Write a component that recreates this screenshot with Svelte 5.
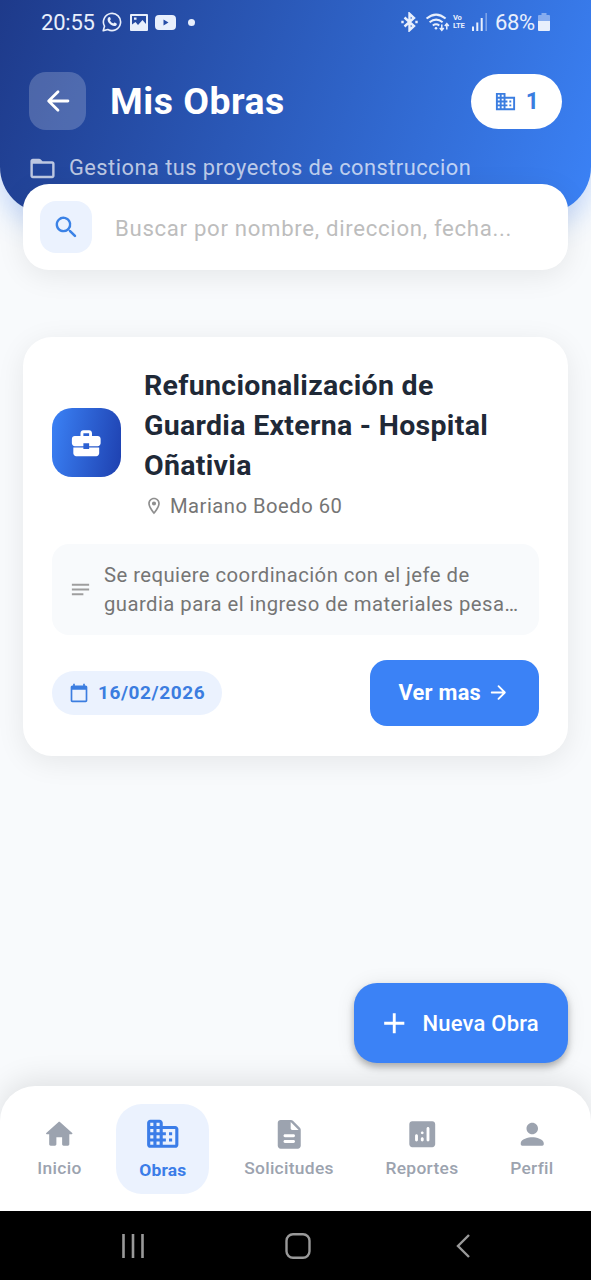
<script>
	let query = $state('');
	let active = $state('Obras');

	const obras = [
		{
			title: 'Refuncionalización de Guardia Externa - Hospital Oñativia',
			address: 'Mariano Boedo 60',
			notes: 'Se requiere coordinación con el jefe de\nguardia para el ingreso de materiales pesa…',
			date: '16/02/2026'
		}
	];

	const windows =
		'M6 19H4v-2h2v2zm0-4H4v-2h2v2zm0-4H4V9h2v2zm0-4H4V5h2v2zm4 12H8v-2h2v2zm0-4H8v-2h2v2zm0-4H8V9h2v2zm0-4H8V5h2v2zm10 12h-8v-2h2v-2h-2v-2h2v-2h-2V9h8v10zm-2-8h-2v2h2v-2zm0 4h-2v2h2v-2z';

	const icons = {
		back: 'M19 11H7.83l4.88-4.88c.39-.39.39-1.03 0-1.42a1 1 0 0 0-1.41 0l-6.59 6.59a1 1 0 0 0 0 1.41l6.59 6.59a1 1 0 0 0 1.41-1.41L7.83 13H19c.55 0 1-.45 1-1s-.45-1-1-1z',
		forward:
			'M5 13h11.17l-4.88 4.88c-.39.39-.39 1.03 0 1.42a1 1 0 0 0 1.41 0l6.59-6.59a1 1 0 0 0 0-1.41l-6.58-6.6a1 1 0 0 0-1.41 1.41L16.17 11H5c-.55 0-1 .45-1 1s.45 1 1 1z',
		building: 'M12 7V3H2v18h20V7H12z' + windows,
		buildingRound:
			'M12 7V5c0-1.1-.9-2-2-2H4c-1.1 0-2 .9-2 2v14c0 1.1.9 2 2 2h16c1.1 0 2-.9 2-2V9c0-1.1-.9-2-2-2h-8z' +
			windows,
		folder:
			'M20 6h-8l-1.41-1.41C10.21 4.21 9.7 4 9.17 4H4c-1.1 0-2 .9-2 2v12c0 1.1.9 2 2 2h16c1.1 0 2-.9 2-2V8c0-1.1-.9-2-2-2zm0 12H4V8h16v10z',
		search:
			'M15.5 14h-.79l-.28-.27a6.5 6.5 0 0 0 1.48-5.34c-.47-2.78-2.79-5-5.59-5.34a6.505 6.505 0 0 0-7.27 7.27c.34 2.8 2.56 5.12 5.34 5.59a6.5 6.5 0 0 0 5.34-1.48l.27.28v.79l4.25 4.25c.41.41 1.08.41 1.49 0 .41-.41.41-1.08 0-1.49L15.5 14zm-6 0C7.01 14 5 11.99 5 9.5S7.01 5 9.5 5 14 7.01 14 9.5 11.99 14 9.5 14z',
		briefcase:
			'M10 16v-1H3.01L3 19c0 1.11.89 2 2 2h14c1.11 0 2-.89 2-2v-4h-7v1h-4zm10-9h-4.01V5c0-1.1-.9-2-2-2h-4c-1.1 0-2 .9-2 2v2H4c-1.1 0-2 .9-2 2v3c0 1.11.89 2 2 2h6v-2h4v2h6c1.1 0 2-.9 2-2V9c0-1.1-.9-2-2-2zm-6 0h-4V5h4v2z',
		pin: 'M12 2C8.13 2 5 5.13 5 9c0 5.25 7 13 7 13s7-7.75 7-13c0-3.87-3.13-7-7-7zM7 9c0-2.76 2.24-5 5-5s5 2.24 5 5c0 2.88-2.88 7.19-5 9.88C9.92 16.21 7 11.85 7 9zm5-2.5a2.5 2.5 0 1 0 0 5 2.5 2.5 0 1 0 0-5z',
		notes: 'M3 6h18v2H3zM3 11h18v2H3zM3 16h12v2H3z',
		calendar:
			'M20 3h-1V1h-2v2H7V1H5v2H4c-1.1 0-2 .9-2 2v16c0 1.1.9 2 2 2h16c1.1 0 2-.9 2-2V5c0-1.1-.9-2-2-2zm0 18H4V8h16v13z',
		plus: 'M19 13h-6v6h-2v-6H5v-2h6V5h2v6h6v2z',
		home: 'M10 19v-5h4v5c0 .55.45 1 1 1h3c.55 0 1-.45 1-1v-7h1.7c.46 0 .68-.57.33-.87L12.67 3.6c-.38-.34-.96-.34-1.34 0l-8.36 7.53c-.34.3-.13.87.33.87H5v7c0 .55.45 1 1 1h3c.55 0 1-.45 1-1z',
		document:
			'M14.59 2.59c-.38-.38-.89-.59-1.42-.59H6c-1.1 0-2 .9-2 2v16c0 1.1.89 2 1.99 2H18c1.1 0 2-.9 2-2V8.83c0-.53-.21-1.04-.59-1.41l-4.82-4.83zM15 18H9c-.55 0-1-.45-1-1s.45-1 1-1h6c.55 0 1 .45 1 1s-.45 1-1 1zm0-4H9c-.55 0-1-.45-1-1s.45-1 1-1h6c.55 0 1 .45 1 1s-.45 1-1 1zm-2-6V3.5L18.5 9H14c-.55 0-1-.45-1-1z',
		chart:
			'M19 3H5c-1.1 0-2 .9-2 2v14c0 1.1.9 2 2 2h14c1.1 0 2-.9 2-2V5c0-1.1-.9-2-2-2zM8 17c-.55 0-1-.45-1-1v-3c0-.55.45-1 1-1s1 .45 1 1v3c0 .55-.45 1-1 1zm4 0c-.55 0-1-.45-1-1v-1c0-.55.45-1 1-1s1 .45 1 1v1c0 .55-.45 1-1 1zm0-5c-.55 0-1-.45-1-1s.45-1 1-1 1 .45 1 1-.45 1-1 1zm4 5c-.55 0-1-.45-1-1V8c0-.55.45-1 1-1s1 .45 1 1v8c0 .55-.45 1-1 1z',
		person:
			'M12 12c2.21 0 4-1.79 4-4s-1.79-4-4-4-4 1.79-4 4 1.79 4 4 4zm0 2c-2.67 0-8 1.34-8 4v1c0 .55.45 1 1 1h14c.55 0 1-.45 1-1v-1c0-2.66-5.33-4-8-4z'
	};

	const tabs = [
		{ label: 'Inicio', icon: 'home' },
		{ label: 'Obras', icon: 'buildingRound' },
		{ label: 'Solicitudes', icon: 'document' },
		{ label: 'Reportes', icon: 'chart' },
		{ label: 'Perfil', icon: 'person' }
	];
</script>

{#snippet icon(name, size)}
	<svg class="icon" width={size} height={size} viewBox="0 0 24 24" fill="currentColor" fill-rule="evenodd">
		<path d={icons[name]} />
	</svg>
{/snippet}

<div class="screen">
	<header>
		<div class="status">
			<span class="time">20:55</span>
			<svg class="whatsapp" width="20" height="20" viewBox="0 0 20 20">
				<path d="M1.2 18.8l1.3-4.6A8.6 8.6 0 1 1 5.8 17.5z" fill="none" stroke="currentColor" stroke-width="1.6" stroke-linejoin="round" />
				<path d="M6.7 5.3c.6-.5 1.2-.4 1.5.2l.6 1.5c.1.5-.5 1-.8 1.4.8 1.5 1.9 2.5 3.5 3.2.4-.4.8-1.1 1.3-1l1.7.9c.7.4.2 1.5-.3 2-1.2 1-3 .7-5-.5C7 11.6 5.7 9.6 5.6 7.8c0-1 .4-2 1.1-2.5z" fill="currentColor" />
			</svg>
			<svg class="gallery" width="18" height="17" viewBox="0 0 18 17" fill="currentColor" fill-rule="evenodd">
				<path d="M1 0h16q1 0 1 1v15q0 1-1 1H1q-1 0-1-1V1q0-1 1-1zM2 2v8.500l3.500-2.500 2.500 3 4.500-5L16 10V2zM4 3.500h2.500v2.300H4z" />
			</svg>
			<svg class="video" width="21" height="15" viewBox="0 0 21 15" fill="currentColor" fill-rule="evenodd">
				<path d="M4 0h13q4 0 4 4v7q0 4-4 4H4q-4 0-4-4V4q0-4 4-4zM8.5 4.5v6l5-3z" />
			</svg>
			<i class="dot"></i>

			<div class="signals">
				<svg width="17" height="20" viewBox="0 0 17 20" fill="none" stroke="currentColor" stroke-width="2.4">
					<path d="M3.5 5.5l9.500 8.500-4.500 4.200V1.800L13 6l-9.500 8.500" />
					<path d="M.3 10h2.400M14.300 10h2.400" />
				</svg>
				<svg class="wifi" width="24" height="19" viewBox="0 0 24 19" fill="none" stroke="currentColor" stroke-width="2">
					<path d="M.6 5.6q9.500-8 19 0M3.600 9.200q6.500-5.200 13 0M6.800 12.500q3.300-2.500 6.500 0" />
					<circle cx="10" cy="15.3" r="1.3" fill="currentColor" stroke="none" />
					<path d="M15.800 11.500v5.500M13.800 15l2 2.300 2-2.300M20.800 16.500v-5.500M18.800 13l2-2.300 2 2.300" stroke-width="1.5" />
				</svg>
				<span class="volte"><b>Vo</b><b>LTE</b></span>
				<svg class="bars" width="16" height="18" viewBox="0 0 16 18" fill="currentColor">
					<path d="M0 13.500h2V18H0zM4.300 9.500h2V18h-2zM8.700 5h2v13h-2z" />
					<path d="M13.400 0h1.600v18h-1.600z" opacity=".4" />
				</svg>
				<span class="percent">68%</span>
				<svg class="battery" width="12" height="18" viewBox="0 0 12 18" fill="currentColor">
					<path d="M3.500 0h5v2H11q1 0 1 1v5H0V3q0-1 1-1h2.500z" opacity=".45" />
					<path d="M0 8h12v9q0 1-1 1H1q-1 0-1-1z" />
				</svg>
			</div>
		</div>

		<div class="heading">
			<button class="back" aria-label="Volver">{@render icon('back', 34)}</button>
			<h1>Mis Obras</h1>
			<div class="count">
				{@render icon('building', 23)}
				<span>{obras.length}</span>
			</div>
		</div>

		<div class="subtitle">
			{@render icon('folder', 29)}
			<span>Gestiona tus proyectos de construccion</span>
		</div>
	</header>

	<main>
		<label class="search">
			<span class="search-icon">{@render icon('search', 29)}</span>
			<input bind:value={query} placeholder="Buscar por nombre, direccion, fecha..." />
		</label>

		{#each obras as obra}
			<article>
				<div class="top">
					<div class="badge">{@render icon('briefcase', 34.5)}</div>
					<div class="info">
						<h2>{obra.title}</h2>
						<p class="address">{@render icon('pin', 20)}<span>{obra.address}</span></p>
					</div>
				</div>
				<div class="notes">
					{@render icon('notes', 23)}
					<p>{obra.notes}</p>
				</div>
				<div class="bottom">
					<span class="date">{@render icon('calendar', 20)}<span>{obra.date}</span></span>
					<button class="more"><span>Ver mas</span>{@render icon('forward', 23)}</button>
				</div>
			</article>
		{/each}

		<button class="fab">{@render icon('plus', 34.5)}<span>Nueva Obra</span></button>
	</main>

	<nav>
		{#each tabs as tab}
			<button class="tab" class:active={tab.label === active} onclick={() => (active = tab.label)}>
				{@render icon(tab.icon, tab.label === active ? 37.5 : 34.5)}
				<span>{tab.label}</span>
			</button>
		{/each}
	</nav>

	<footer>
		<svg width="24" height="24" viewBox="0 0 24 24" stroke="currentColor" stroke-width="2.6">
			<path d="M2.500 0v24M12 0v24M21.500 0v24" />
		</svg>
		<svg width="26" height="26" viewBox="0 0 26 26" fill="none" stroke="currentColor" stroke-width="2.4">
			<rect x="1.5" y="1.2" width="23" height="23.6" rx="6.5" />
		</svg>
		<svg width="14" height="24" viewBox="0 0 14 24" fill="none" stroke="currentColor" stroke-width="2.4">
			<path d="M13 1L2 12l11 11" />
		</svg>
	</footer>
</div>

<style>
	:global(body) {
		margin: 0;
	}

	.screen {
		height: 1280px;
		display: flex;
		flex-direction: column;
		overflow: hidden;
		background: #f8fafc;
		font-family: Roboto, sans-serif;
	}

	.screen * {
		box-sizing: border-box;
	}

	h1,
	h2,
	p {
		margin: 0;
	}

	button {
		border: 0;
		padding: 0;
		font: inherit;
		display: flex;
		align-items: center;
		white-space: nowrap;
	}

	svg {
		display: block;
		flex: none;
	}

	header {
		height: 213px;
		flex: none;
		color: #fff;
		background: linear-gradient(109.8deg, #1e3a8a, #3b82f6);
		border-radius: 0 0 46px 46px;
		box-shadow: 0 11px 29px rgb(59 130 246 / 0.3);
	}

	.status {
		height: 44px;
		padding: 0 41px;
		display: flex;
		align-items: center;
		font-size: 22px;
		color: #e8effc;
	}

	.time {
		width: 55px;
		letter-spacing: -0.2px;
	}

	.whatsapp {
		margin-left: 6px;
	}

	.gallery {
		margin-left: 8px;
	}

	.video {
		margin-left: 7px;
	}

	.dot {
		width: 7px;
		height: 7px;
		margin-left: 12px;
		border-radius: 50%;
		background: currentColor;
	}

	.signals {
		margin-left: auto;
		display: flex;
		align-items: center;
	}

	.wifi {
		margin-left: 8px;
	}

	.volte {
		margin-left: 3px;
		width: 14px;
		display: grid;
		font-size: 7.6px;
		line-height: 8px;
		letter-spacing: -0.2px;
	}

	.bars {
		margin-left: 5px;
	}

	.percent {
		margin-left: 7px;
		width: 40px;
		letter-spacing: -0.4px;
	}

	.battery {
		margin-left: 3px;
	}

	.heading {
		height: 58px;
		margin: 28px 0 23px;
		padding: 0 29px;
		display: flex;
		align-items: center;
	}

	.back {
		width: 57px;
		height: 58px;
		justify-content: center;
		border-radius: 17px;
		color: #fff;
		background: rgb(255 255 255 / 0.2);
	}

	h1 {
		margin-left: 24px;
		font-size: 37.4px;
		font-weight: 700;
		letter-spacing: 0.5px;
	}

	.count {
		height: 55px;
		margin-left: auto;
		padding: 0 23px;
		display: flex;
		align-items: center;
		gap: 9px;
		border-radius: 28px;
		background: #fff;
		color: #3b7de0;
		font-size: 23px;
		font-weight: 700;
	}

	.subtitle {
		padding-left: 28px;
		display: flex;
		align-items: center;
		gap: 12px;
		font-size: 21.8px;
		line-height: 30px;
		letter-spacing: 0.48px;
		color: rgb(255 255 255 / 0.7);
	}

	main {
		position: relative;
		flex: 1;
		padding: 0 23px;
	}

	.search {
		height: 86px;
		margin-top: -29px;
		padding: 0 17px;
		display: flex;
		align-items: center;
		gap: 23px;
		border-radius: 26px;
		background: #fff;
		box-shadow: 0 6px 29px rgb(0 0 0 / 0.08);
	}

	.search-icon {
		width: 52px;
		height: 52px;
		display: grid;
		place-content: center;
		border-radius: 16px;
		background: #ebf2fe;
		color: #3b82e6;
	}

	input {
		flex: 1;
		min-width: 0;
		border: 0;
		padding: 2px 0 0;
		outline: 0;
		font: 22.2px Roboto, sans-serif;
		letter-spacing: 0.68px;
		background: none;
	}

	input::placeholder {
		color: #bdbdbd;
	}

	article {
		height: 419px;
		margin-top: 67px;
		padding: 29px;
		border-radius: 29px;
		background: #fff;
		box-shadow: 0 6px 29px rgb(0 0 0 / 0.08);
	}

	.top {
		display: flex;
		align-items: center;
		gap: 23px;
	}

	.badge {
		width: 69px;
		height: 69px;
		flex: none;
		display: grid;
		place-content: center;
		border-radius: 20px;
		color: #fff;
		background: linear-gradient(100deg, #3b82f6, #1e40af);
	}

	h2 {
		font-size: 28.5px;
		line-height: 40.2px;
		font-weight: 700;
		letter-spacing: 0.3px;
		color: #1f2937;
	}

	.address {
		height: 28px;
		margin-top: 5px;
		display: flex;
		align-items: center;
		gap: 6px;
		font-size: 20.2px;
		letter-spacing: 0.5px;
		color: #757575;
	}

	.address .icon {
		color: #8f8f8f;
	}

	.notes {
		height: 91px;
		margin-top: 24px;
		padding: 0 17px;
		display: flex;
		align-items: center;
		gap: 12px;
		border-radius: 17px;
		background: #f8fafc;
		color: #9e9e9e;
	}

	.notes p {
		padding-top: 2px;
		font-size: 20.3px;
		line-height: 28.75px;
		letter-spacing: 0.45px;
		white-space: pre;
		color: #757575;
	}

	.bottom {
		margin-top: 25px;
		display: flex;
		align-items: center;
		justify-content: space-between;
	}

	.date {
		height: 44px;
		padding: 0 17px;
		display: flex;
		align-items: center;
		gap: 9px;
		border-radius: 22px;
		background: #ebf2fe;
		color: #3b7de0;
		font-size: 19px;
		font-weight: 700;
		letter-spacing: 0.58px;
	}

	.more {
		height: 66px;
		padding: 0 29px;
		gap: 6px;
		border-radius: 17px;
		background: #3b82f6;
		color: #fff;
		font-size: 21.8px;
		font-weight: 700;
		letter-spacing: 0.25px;
	}

	.fab {
		position: absolute;
		right: 23px;
		bottom: 23px;
		width: 214px;
		height: 80px;
		padding-left: 23px;
		gap: 11px;
		border-radius: 23px;
		background: #3b82f6;
		color: #fff;
		font-size: 22px;
		font-weight: 500;
		letter-spacing: 0.2px;
		box-shadow: 0 4px 7px rgb(0 0 0 / 0.28), 0 1px 20px rgb(0 0 0 / 0.08);
	}

	nav {
		height: 125px;
		flex: none;
		padding: 0 11.5px;
		display: flex;
		align-items: center;
		justify-content: space-around;
		border-radius: 35px 35px 0 0;
		background: #fff;
		box-shadow: 0 -6px 29px rgb(0 0 0 / 0.1);
	}

	.tab {
		height: 90px;
		padding: 0 17px 2px;
		flex-direction: column;
		justify-content: center;
		gap: 7px;
		border-radius: 26px;
		background: none;
		color: #9ca3af;
		font-size: 17.4px;
		line-height: 20px;
		font-weight: 500;
		letter-spacing: 0.3px;
	}

	.tab.active {
		padding: 0 23px 2px;
		background: #ebf2fe;
		color: #3b7de8;
		font-weight: 700;
		letter-spacing: 0.2px;
	}

	footer {
		height: 69px;
		flex: none;
		padding: 0 121px;
		display: grid;
		grid-template-columns: 164px 171px 14px;
		align-items: center;
		background: #000;
		color: #999;
	}
</style>
